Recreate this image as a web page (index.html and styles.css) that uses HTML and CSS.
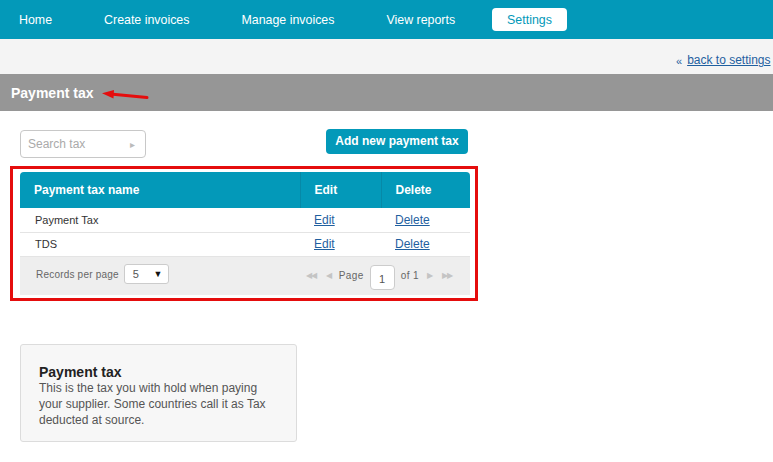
FILE: index.html
```html
<!DOCTYPE html>
<html lang="en">
<head>
  <meta charset="UTF-8" />
  <title>Payment tax</title>
  <link rel="stylesheet" href="styles.css">
</head>
<body>

  <nav class="topnav">
    <a href="#">Home</a>
    <a href="#">Create invoices</a>
    <a href="#">Manage invoices</a>
    <a href="#">View reports</a>
    <a href="#" class="active">Settings</a>
  </nav>

  <div class="subbar">
    <span class="back-icon">&laquo;</span>
    <a href="#">back to settings</a>
  </div>

  <div class="page-title">
    <h1>Payment tax</h1>
    <svg class="arrow" width="48" height="10" viewBox="0 0 48 10">
      <path d="M46 7.5 L12 4.2" stroke="#e50d0d" stroke-width="3" stroke-linecap="round" fill="none"/>
      <path d="M1 3.2 L13 0 L12.5 8.5 Z" fill="#e50d0d"/>
    </svg>
  </div>

  <div class="content">
    <div class="toolbar">
      <div class="search">
        <span>Search tax</span>
        <span class="search-arrow">&#9656;</span>
      </div>
      <a href="#" class="btn">Add new payment tax</a>
    </div>

    <div class="highlight">
      <table class="grid">
        <thead>
          <tr>
            <th class="col-name">Payment tax name</th>
            <th class="col-edit">Edit</th>
            <th class="col-del">Delete</th>
          </tr>
        </thead>
        <tbody>
          <tr>
            <td class="name">Payment Tax</td>
            <td><a href="#">Edit</a></td>
            <td><a href="#">Delete</a></td>
          </tr>
          <tr>
            <td class="name">TDS</td>
            <td><a href="#">Edit</a></td>
            <td><a href="#">Delete</a></td>
          </tr>
        </tbody>
      </table>
      <div class="pager">
        <div class="per-page">
          <span>Records per page</span>
          <div class="select"><span>5</span><span class="caret">&#9660;</span></div>
        </div>
        <div class="pages">
          <span class="pg-icon">&#9664;&#9664;</span>
          <span class="pg-icon">&#9664;</span>
          <span>Page</span>
          <div class="page-box">1</div>
          <span>of 1</span>
          <span class="pg-icon">&#9654;</span>
          <span class="pg-icon">&#9654;&#9654;</span>
        </div>
      </div>
    </div>

    <div class="info">
      <h3>Payment tax</h3>
      <p>This is the tax you with hold when paying your supplier. Some countries call it as Tax deducted at source.</p>
    </div>
  </div>

</body>
</html>
```

FILE: styles.css
```css
* {
  margin: 0;
  padding: 0;
  box-sizing: border-box;
}

body {
  font-family: "Liberation Sans", Arial, sans-serif;
  font-size: 12px;
  color: #333;
  background: #fff;
  overflow: hidden;
}

a {
  color: #1f5f9f;
}

.topnav {
  height: 39px;
  background-color: #0399b9;
  display: flex;
  align-items: center;
  gap: 22px;
  padding-left: 4px;
}

.topnav a {
  color: #fff;
  text-decoration: none;
  font-size: 12.4px;
  padding: 5px 15px 4px;
  border-radius: 4px;
  line-height: 14px;
}

.topnav a.active {
  background-color: #fff;
  color: #0399b9;
}

.subbar {
  height: 35px;
  background-color: #f4f4f4;
  display: flex;
  align-items: flex-end;
  padding: 0 0 7px 676px;
  white-space: nowrap;
}

.subbar a {
  font-size: 12px;
}

.back-icon {
  color: #1f5f9f;
  font-size: 11px;
  margin-right: 5px;
}

.page-title {
  height: 37px;
  background-color: #969696;
  display: flex;
  align-items: center;
  padding-left: 11px;
}

.page-title h1 {
  color: #fff;
  font-size: 14px;
  font-weight: bold;
}

.arrow {
  margin: 5px 0 0 8px;
}

.content {
  padding-top: 18px;
}

.toolbar {
  display: flex;
  align-items: flex-start;
  padding-left: 20px;
  width: 468px;
  justify-content: space-between;
}

.search {
  width: 126px;
  height: 28px;
  margin-top: 1px;
  border: 1px solid #c8c8c8;
  border-radius: 4px;
  display: flex;
  align-items: center;
  justify-content: space-between;
  padding: 0 10px 0 7px;
  color: #aaa;
}

.search-arrow {
  color: #bbb;
  font-size: 10px;
}

.btn {
  background-color: #0399b9;
  color: #fff;
  font-weight: bold;
  text-decoration: none;
  border-radius: 4px;
  width: 142px;
  height: 25px;
  line-height: 25px;
  text-align: center;
}

.highlight {
  margin: 8px 0 0 10px;
  width: 468px;
  border: 3px solid #e50d0d;
  padding: 3px 5px 3px 7px;
}

.grid {
  width: 450px;
  border-collapse: collapse;
}

.grid th {
  background-color: #0399b9;
  color: #fff;
  font-size: 12px;
  font-weight: bold;
  text-align: left;
  height: 36px;
  padding: 0 14px;
}

.grid th + th {
  border-left: 1px solid #0689a7;
}

.grid th.col-name {
  width: 280px;
  border-top-left-radius: 4px;
}

.grid th.col-edit {
  width: 81px;
}

.grid th.col-del {
  border-top-right-radius: 4px;
}

.grid td {
  height: 24px;
  padding: 0 14px;
  border-bottom: 1px solid #e4e4e4;
}

.grid td.name {
  font-size: 11px;
  padding-left: 15px;
}

.pager {
  background-color: #eee;
  height: 38px;
  display: flex;
  align-items: center;
  justify-content: space-between;
  padding: 0 16px 0 16px;
  color: #666;
  font-size: 10px;
}

.per-page {
  display: flex;
  align-items: center;
  gap: 5px;
  letter-spacing: 0.2px;
  margin-top: -3px;
}

.select {
  width: 45px;
  height: 20px;
  background: #fff;
  border: 1px solid #ccc;
  border-radius: 3px;
  display: flex;
  align-items: center;
  justify-content: space-between;
  padding: 0 5px 0 8px;
  color: #555;
  font-size: 11px;
}

.caret {
  color: #111;
  font-size: 9px;
}

.pages {
  display: flex;
  align-items: center;
  gap: 6px;
  letter-spacing: 0.4px;
}

.pg-icon {
  color: #c4c4c4;
  font-size: 8px;
  letter-spacing: -1px;
  margin: 0 2px;
}

.page-box {
  width: 25px;
  height: 25px;
  background: #fff;
  border: 1px solid #ccc;
  border-radius: 4px;
  text-align: center;
  line-height: 27px;
  color: #555;
  margin-top: 3px;
  font-size: 11px;
}

.info {
  margin: 43px 0 0 20px;
  width: 277px;
  height: 98px;
  background-color: #f7f7f7;
  border: 1px solid #dcdcdc;
  border-radius: 3px;
  padding: 19px 18px;
}

.info h3 {
  font-size: 14px;
  font-weight: bold;
  color: #222;
  line-height: 16px;
}

.info p {
  font-size: 12px;
  line-height: 16px;
  color: #555;
}
```
